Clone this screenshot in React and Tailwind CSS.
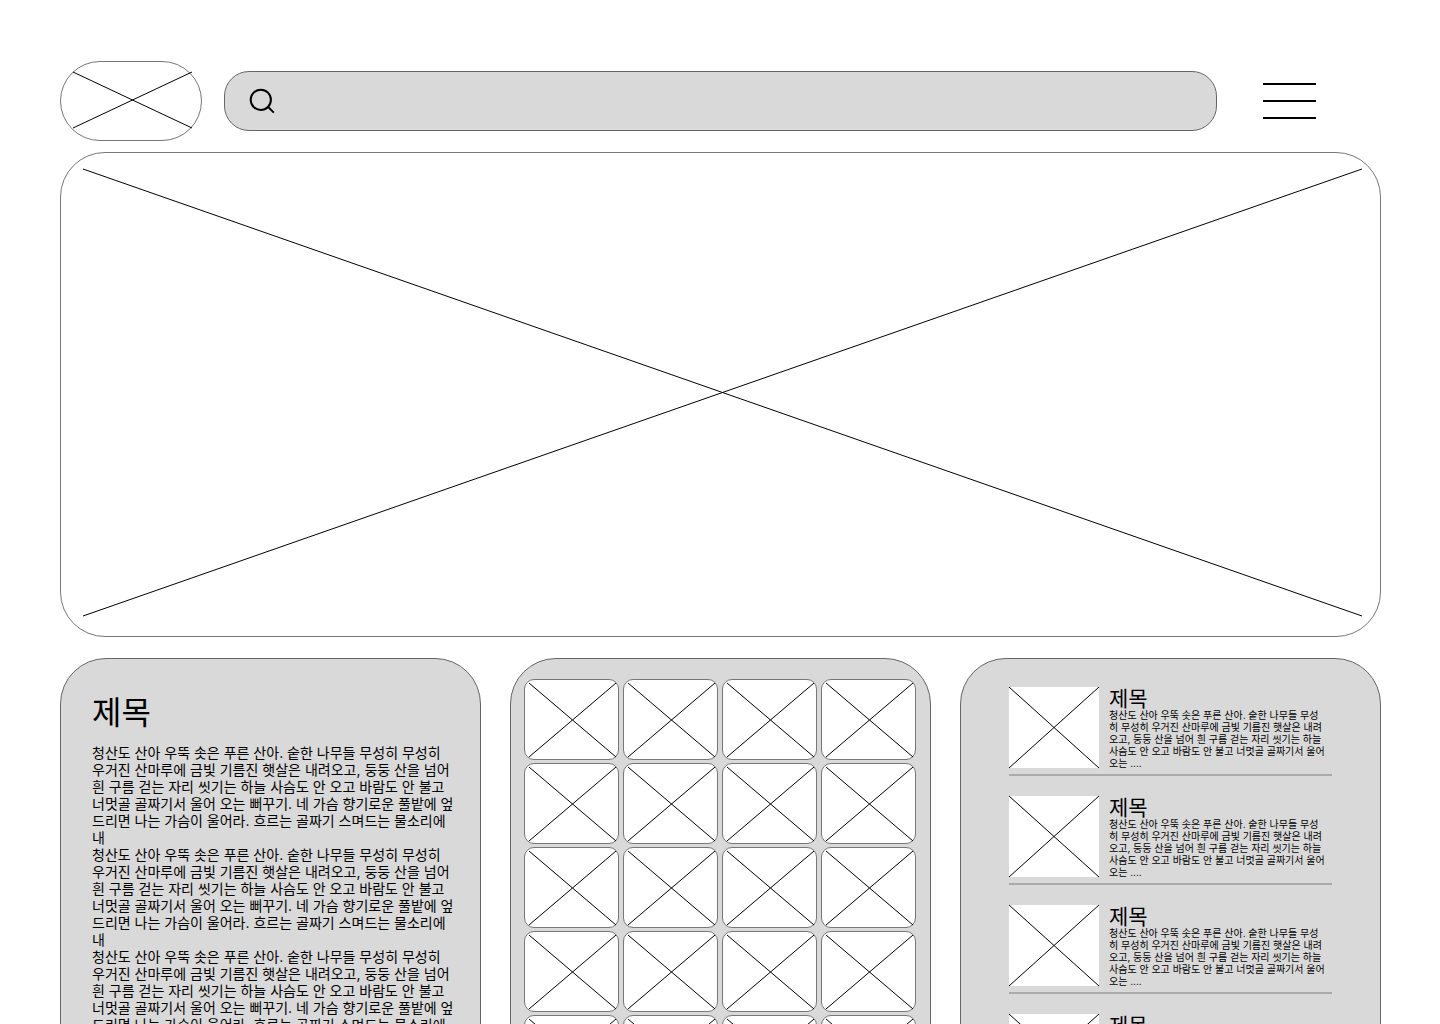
const ARTICLE =
  '청산도 산아 우뚝 솟은 푸른 산아. 숱한 나무들 무성히 무성히 우거진 산마루에 금빛 기름진 햇살은 내려오고, 둥둥 산을 넘어 흰 구름 걷는 자리 씻기는 하늘 사슴도 안 오고 바람도 안 불고 너멋골 골짜기서 울어 오는 뻐꾸기. 네 가슴 향기로운 풀밭에 엎드리면 나는 가슴이 울어라. 흐르는 골짜기 스며드는 물소리에 내';

const SUMMARY =
  '청산도 산아 우뚝 솟은 푸른 산아. 숱한 나무들 무성히 무성히 우거진 산마루에 금빛 기름진 햇살은 내려오고, 둥둥 산을 넘어 흰 구름 걷는 자리 씻기는 하늘 사슴도 안 오고 바람도 안 불고 너멋골 골짜기서 울어 오는 ....';

const PARAGRAPHS = [0, 1, 2];
const TILES = Array.from({ length: 20 }, (_, i) => i);
const POSTS = [0, 1, 2, 3];

// Diagonal cross that marks an image placeholder; it fills its parent's content box.
function Cross() {
  return (
    <svg className="block h-full w-full overflow-visible" stroke="#000" strokeWidth="1" aria-hidden="true">
      <line x1="0" y1="0" x2="100%" y2="100%" />
      <line x1="0" y1="100%" x2="100%" y2="0" />
    </svg>
  );
}

function SearchIcon() {
  return (
    <svg className="h-7 w-7 shrink-0" viewBox="0 0 28 28" fill="none" stroke="#000" strokeWidth="2" aria-hidden="true">
      <circle cx="11.8" cy="12.8" r="10.1" />
      <path d="M18.8 19.6L24.8 25.6" />
    </svg>
  );
}

function Header() {
  return (
    <header className="flex items-center">
      <a href="#" aria-label="홈" className="h-20 w-[142px] shrink-0 rounded-[40px] border border-[#777] pt-[10px] pr-[9px] pb-3 pl-3">
        <Cross />
      </a>
      <label className="ml-[22px] flex h-[60px] flex-1 items-center rounded-[25px] border border-[#666] bg-[#d9d9d9] pl-6">
        <SearchIcon />
        <input type="search" aria-label="검색" className="ml-3 h-full min-w-0 flex-1 bg-transparent pr-6 text-base outline-none" />
      </label>
      <button type="button" aria-label="메뉴" className="mr-[65px] ml-[46px] flex w-[53px] shrink-0 flex-col gap-[15px]">
        <span className="h-0.5 w-full bg-black" />
        <span className="h-0.5 w-full bg-black" />
        <span className="h-0.5 w-full bg-black" />
      </button>
    </header>
  );
}

function Panel({ className, children }) {
  return (
    <section className={`min-w-0 rounded-[46px] border border-[#666] bg-[#d9d9d9] ${className}`}>{children}</section>
  );
}

export default function App() {
  return (
    <div className="min-h-screen bg-white pt-[61px] pr-[59px] pb-15 pl-15 font-['Inter','Noto_Sans_CJK_KR',sans-serif] text-black">
      <Header />
      <div className="mt-[11px] h-[485px] rounded-[45px] border border-[#777] pt-4 pr-[18px] pb-5 pl-[22px]">
        <Cross />
      </div>
      <main className="mt-[21px] grid grid-cols-3 gap-[29px]">
        <Panel className="pt-[34px] pr-[26px] pb-9 pl-[31px]">
          <h1 className="text-[32px] leading-[39px]">제목</h1>
          <div className="mt-3 text-sm leading-[17px]">
            {PARAGRAPHS.map((i) => (
              <p key={i}>{ARTICLE}</p>
            ))}
          </div>
        </Panel>
        <Panel className="pt-5 pr-[14px] pb-9 pl-[13px]">
          <ul className="grid grid-cols-4 gap-x-1 gap-y-[3px]">
            {TILES.map((i) => (
              <li key={i} className="h-[81px] rounded-[10px] border border-[#777] bg-white pt-[3px] pr-0.5 pb-0.5 pl-1">
                <Cross />
              </li>
            ))}
          </ul>
        </Panel>
        <Panel className="pt-7 pr-12 pb-9 pl-12">
          <ul className="flex flex-col gap-5">
            {POSTS.map((i) => (
              <li key={i} className="flex gap-[10px] border-b-2 border-[#aaa] pb-[6px]">
                <div className="h-[81px] w-[90px] shrink-0 bg-white">
                  <Cross />
                </div>
                <div className="h-[81px] flex-1 pr-[5px]">
                  <h2 className="-mb-0.5 text-[21px] leading-6">제목</h2>
                  <p className="text-[10px] leading-3">{SUMMARY}</p>
                </div>
              </li>
            ))}
          </ul>
        </Panel>
      </main>
    </div>
  );
}
